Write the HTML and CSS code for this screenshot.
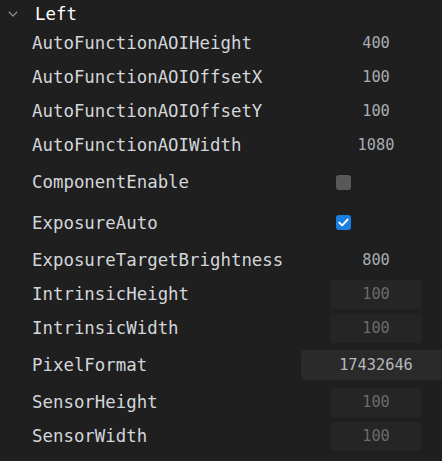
FILE: index.html
```html
<!DOCTYPE html>
<html>
<head>
<meta charset="utf-8">
<link rel="stylesheet" href="styles.css">
</head>
<body>
<div class="panel">
  <div class="group-head">
    <svg class="chev" width="10" height="6" viewBox="0 0 10 6"><path d="M0.8 0.8 L5 5 L9.2 0.8" fill="none" stroke="#8a8c8f" stroke-width="1.3"/></svg>
    <span class="group-title">Left</span>
  </div>
  <div class="row"><span class="name">AutoFunctionAOIHeight</span><span class="val">400</span></div>
  <div class="row"><span class="name">AutoFunctionAOIOffsetX</span><span class="val">100</span></div>
  <div class="row"><span class="name">AutoFunctionAOIOffsetY</span><span class="val">100</span></div>
  <div class="row"><span class="name">AutoFunctionAOIWidth</span><span class="val">1080</span></div>
  <div class="row check"><span class="name">ComponentEnable</span><span class="val left"><span class="cb"></span></span></div>
  <div class="row check"><span class="name">ExposureAuto</span><span class="val left"><span class="cb on"><svg width="15" height="15" viewBox="0 0 15 15"><path d="M3.3 7.6 L6.2 10.4 L11.6 4.6" fill="none" stroke="#fff" stroke-width="2" stroke-linecap="round" stroke-linejoin="round"/></svg></span></span></div>
  <div class="row"><span class="name">ExposureTargetBrightness</span><span class="val">800</span></div>
  <div class="row"><span class="name">IntrinsicHeight</span><span class="val"><span class="input dis">100</span></span></div>
  <div class="row"><span class="name">IntrinsicWidth</span><span class="val"><span class="input dis">100</span></span></div>
  <div class="row tall"><span class="name">PixelFormat</span><span class="val"><span class="input wide">17432646</span></span></div>
  <div class="row"><span class="name">SensorHeight</span><span class="val"><span class="input dis">100</span></span></div>
  <div class="row"><span class="name">SensorWidth</span><span class="val"><span class="input dis">100</span></span></div>
  <div class="row"><span class="name">Right</span></div>
</div>
</body>
</html>
```
FILE: styles.css
```css
html, body {
  margin: 0;
  padding: 0;
  background: #1f1f1f;
  overflow: hidden;
}
.panel {
  width: 442px;
  font-family: "DejaVu Sans Mono", "Liberation Mono", monospace;
  overflow: hidden;
}
.group-head {
  height: 26px;
  display: flex;
  align-items: center;
  padding-left: 8px;
  gap: 17px;
}
.chev {
  display: block;
  margin-top: 2px;
}
.group-title {
  color: #ffffff;
  font-size: 17.4px;
  font-weight: 500;
  margin-top: 1px;
}
.row {
  height: 34px;
  display: flex;
  align-items: center;
  padding: 0 20px 0 32px;
}
.row.check {
  height: 40.5px;
}
.row.tall {
  height: 40px;
}
.name {
  flex: 1;
  color: #d3d6da;
  font-size: 17.4px;
  white-space: nowrap;
}
.val {
  width: 92px;
  display: flex;
  justify-content: center;
  align-items: center;
  color: #a9adb2;
  font-size: 15.3px;
}
.val.left {
  justify-content: flex-start;
  padding-left: 6px;
  box-sizing: border-box;
}
.cb {
  width: 15px;
  height: 15px;
  border-radius: 3px;
  background: #595959;
  display: block;
}
.cb.on {
  background: #1a7fe2;
}
.cb svg {
  display: block;
}
.input {
  display: flex;
  align-items: center;
  justify-content: center;
  width: 92px;
  height: 29px;
  border-radius: 4px;
  background: #252525;
  flex: none;
}
.input.dis {
  color: #6b6b6b;
}
.input.wide {
  width: 150px;
  height: 30px;
  background: #2a2a2a;
  color: #b3b8bd;
}
```
